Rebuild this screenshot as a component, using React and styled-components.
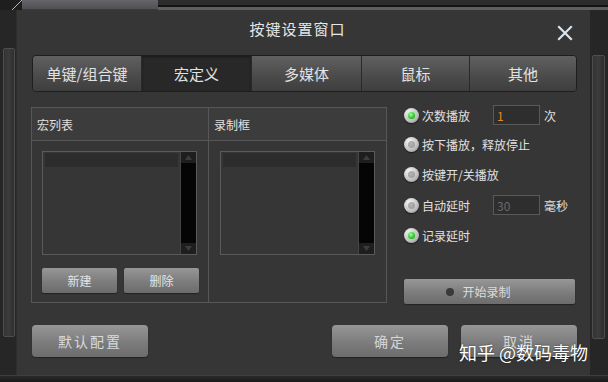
import React from "react";
import styled, { createGlobalStyle, css } from "styled-components";

const Global = createGlobalStyle`
  html, body { margin: 0; padding: 0; background: #2b2b2b; }
  body { font-family: "Noto Sans CJK SC", "Noto Sans", sans-serif; }
`;

const Window = styled.div`
  width: 608px;
  height: 382px;
  display: flex;
  flex-direction: column;
  background: #2a2a2a;
  overflow: hidden;
  position: relative;
`;

const TopFrame = styled.div`
  height: 10px;
  display: flex;
  flex-shrink: 0;
`;

const TopCorner = styled.div`
  width: 22px;
  background: #1e1e1e;
`;

const TopLight = styled.div`
  width: 136px;
  background: linear-gradient(#66666a, #505054);
  border-bottom: 1px solid #3a3a3a;
`;

const TopDark = styled.div`
  flex: 1;
  background: linear-gradient(#2c2c2c 0 55%, #141414 55% 70%, #5e5e5e 70% 100%);
`;

const Middle = styled.div`
  flex: 1;
  display: flex;
  min-height: 0;
`;

const Rail = styled.div`
  width: ${(p) => p.$w}px;
  flex-shrink: 0;
  background: #262626;
  display: flex;
  flex-direction: column;
  padding: ${(p) => p.$pad};
  box-sizing: border-box;
`;

const RailBar = styled.div`
  flex: 1;
  margin: ${(p) => p.$m};
  border: 1px solid #4e4e4e;
  border-radius: 2px;
  background: linear-gradient(90deg, #343434 0%, #3c3c3c 50%, #2e2e2e 100%);
`;

const Panel = styled.div`
  flex: 1;
  background: #363636;
  display: flex;
  flex-direction: column;
  padding: 0 13px 0 15px;
  border-left: 1px solid #2e2e2e;
`;

const TitleBar = styled.div`
  height: 45px;
  display: flex;
  align-items: center;
  justify-content: center;
  position: relative;
  flex-shrink: 0;
`;

const Title = styled.div`
  color: #e6e6e6;
  font-size: 15px;
  letter-spacing: 1px;
  margin-top: -8px;
  margin-left: -14px;
`;

const Close = styled.div`
  position: absolute;
  right: 3px;
  top: 13px;
  width: 18px;
  height: 18px;
`;

const Tabs = styled.div`
  height: 37px;
  display: grid;
  grid-template-columns: 109px 110px 110px 108px 1fr;
  border: 1px solid #1e1e1e;
  border-radius: 4px;
  overflow: hidden;
  box-sizing: border-box;
  flex-shrink: 0;
`;

const Tab = styled.div`
  display: flex;
  align-items: center;
  justify-content: center;
  color: #e2e2e2;
  font-size: 15px;
  border-right: 1px solid #2a2a2a;
  background: linear-gradient(#606060, #4a4a4a 60%, #3e3e3e);
  &:last-child { border-right: none; }
  ${(p) =>
    p.$active &&
    css`
      background: #282828;
      box-shadow: inset 0 1px 2px #1a1a1a;
    `}
`;

const Content = styled.div`
  display: flex;
  margin-top: 15px;
  gap: 17px;
  flex-shrink: 0;
`;

const GroupBox = styled.div`
  width: 356px;
  height: 196px;
  box-sizing: border-box;
  border: 1px solid #575757;
  display: grid;
  grid-template-columns: 177px 1fr;
  margin-left: -1px;
`;

const GroupCol = styled.div`
  display: flex;
  flex-direction: column;
  border-right: ${(p) => (p.$divider ? "1px solid #575757" : "none")};
`;

const GroupHead = styled.div`
  height: 32px;
  background: #3c3c3c;
  border-bottom: 1px solid #575757;
  color: #e0e0e0;
  font-size: 12px;
  display: flex;
  align-items: center;
  padding-left: 5px;
  flex-shrink: 0;
`;

const GroupBody = styled.div`
  padding: 10px 0 0 ${(p) => p.$pl}px;
  display: flex;
  flex-direction: column;
`;

const ListBox = styled.div`
  width: 155px;
  height: 104px;
  box-sizing: border-box;
  border: 1px solid #5a5a5a;
  background: #363636;
  display: flex;
`;

const ListArea = styled.div`
  flex: 1;
  padding: 1px 2px;
`;

const ListRow = styled.div`
  height: 14px;
  background: #2c2c2c;
`;

const ScrollBar = styled.div`
  width: 15px;
  background: #050505;
  border-left: 1px solid #444;
  display: flex;
  flex-direction: column;
  justify-content: space-between;
`;

const ScrollBtn = styled.div`
  height: 11px;
  background: #1e1e1e;
  display: flex;
  align-items: center;
  justify-content: center;
`;

const BtnRow = styled.div`
  display: flex;
  gap: 7px;
  margin-top: 13px;
`;

const GreyButton = styled.div`
  width: ${(p) => p.$w}px;
  height: ${(p) => p.$h}px;
  box-sizing: border-box;
  border-radius: ${(p) => p.$r || 2}px;
  background: linear-gradient(#979797, #7c7c7c 55%, #6c6c6c);
  color: ${(p) => p.$color || "#e4e4e4"};
  font-size: ${(p) => p.$fs || 12}px;
  letter-spacing: ${(p) => p.$ls || 0}px;
  display: flex;
  align-items: center;
  justify-content: center;
  gap: 8px;
  box-shadow: 0 1px 1px #222;
`;

const RightCol = styled.div`
  width: 172px;
  display: flex;
  flex-direction: column;
`;

const OptRow = styled.div`
  height: 20px;
  display: flex;
  align-items: center;
  margin-top: ${(p) => p.$mt || 0}px;
  margin-bottom: ${(p) => p.$mb}px;
  color: #e0e0e0;
  font-size: 12px;
`;

const Radio = styled.div`
  width: 15px;
  height: 15px;
  border-radius: 50%;
  background: radial-gradient(circle at 35% 30%, #f4f4f4, #c4c4c4 55%, #8a8a8a);
  box-shadow: 0 1px 1px #1a1a1a;
  display: flex;
  align-items: center;
  justify-content: center;
  margin-right: 3px;
  flex-shrink: 0;
  &::after {
    content: "";
    width: 7px;
    height: 7px;
    border-radius: 50%;
    background: ${(p) =>
      p.$on
        ? "radial-gradient(circle at 40% 35%, #9cff9c, #2ec22e 60%, #1a8a1a)"
        : "radial-gradient(circle at 40% 35%, #b5b5b5, #969696)"};
    box-shadow: ${(p) => (p.$on ? "0 0 2px #5f5" : "none")};
  }
`;

const OptLabel = styled.span`
  width: 71px;
  white-space: nowrap;
`;

const NumInput = styled.div`
  width: 47px;
  height: 20px;
  box-sizing: border-box;
  border: 1px solid #595959;
  background: #2e2e2e;
  color: ${(p) => p.$color};
  font-size: 12px;
  display: flex;
  align-items: center;
  padding-left: 3px;
  margin-right: 4px;
`;

const RecordBtnWrap = styled.div`
  margin-top: 34px;
`;

const Dot = styled.span`
  width: 8px;
  height: 8px;
  border-radius: 50%;
  background: #3a3a3a;
  margin-left: -22px;
`;

const Footer = styled.div`
  display: flex;
  align-items: flex-start;
  margin-top: 21px;
`;

const Spacer = styled.div`
  flex: 1;
`;

const FooterGap = styled.div`
  width: 13px;
`;

const Watermark = styled.div`
  position: absolute;
  left: 459px;
  top: 339px;
  color: #ffffff;
  font-size: 18px;
  white-space: nowrap;
  text-shadow: 0 0 2px rgba(0, 0, 0, 0.6);
`;

const BottomFrame = styled.div`
  height: 6px;
  background: linear-gradient(#2a2a2a, #1a1a1a);
  border-top: 1px solid #3e3e3e;
  flex-shrink: 0;
`;

const CornerSvg = styled.svg`
  display: block;
`;

function XIcon() {
  return (
    <svg width="18" height="18" viewBox="0 0 18 18">
      <path d="M3 3 L15 15 M15 3 L3 15" stroke="#d8e6ee" strokeWidth="2.2" strokeLinecap="square" />
    </svg>
  );
}

function ScrollArrow({ up }) {
  return (
    <svg width="7" height="5" viewBox="0 0 7 5">
      <path d={up ? "M0 5 L3.5 0 L7 5 Z" : "M0 0 L3.5 5 L7 0 Z"} fill="#3c3c3c" />
    </svg>
  );
}

function List() {
  return (
    <ListBox>
      <ListArea>
        <ListRow />
      </ListArea>
      <ScrollBar>
        <ScrollBtn>
          <ScrollArrow up />
        </ScrollBtn>
        <ScrollBtn>
          <ScrollArrow />
        </ScrollBtn>
      </ScrollBar>
    </ListBox>
  );
}

export default function App() {
  return (
    <>
      <Global />
      <Window>
        <TopFrame>
          <TopCorner>
            <CornerSvg width="22" height="10" viewBox="0 0 22 10">
              <path d="M12 10 L22 0" stroke="#b8c87a" strokeWidth="1" />
            </CornerSvg>
          </TopCorner>
          <TopLight />
          <TopDark />
        </TopFrame>
        <Middle>
          <Rail $w={16} $pad="0 0 0 3px">
            <RailBar $m="38px 1px 38px 0" />
          </Rail>
          <Panel>
            <TitleBar>
              <Title>按键设置窗口</Title>
              <Close>
                <XIcon />
              </Close>
            </TitleBar>
            <Tabs>
              <Tab>单键/组合键</Tab>
              <Tab $active>宏定义</Tab>
              <Tab>多媒体</Tab>
              <Tab>鼠标</Tab>
              <Tab>其他</Tab>
            </Tabs>
            <Content>
              <GroupBox>
                <GroupCol $divider>
                  <GroupHead>宏列表</GroupHead>
                  <GroupBody $pl={10}>
                    <List />
                    <BtnRow>
                      <GreyButton $w={75} $h={25}>新建</GreyButton>
                      <GreyButton $w={75} $h={25}>删除</GreyButton>
                    </BtnRow>
                  </GroupBody>
                </GroupCol>
                <GroupCol>
                  <GroupHead>录制框</GroupHead>
                  <GroupBody $pl={11}>
                    <List />
                  </GroupBody>
                </GroupCol>
              </GroupBox>
              <RightCol>
                <OptRow $mt={-2} $mb={9}>
                  <Radio $on />
                  <OptLabel>次数播放</OptLabel>
                  <NumInput $color="#e8862c">1</NumInput>
                  次
                </OptRow>
                <OptRow $mb={10}>
                  <Radio />
                  按下播放，释放停止
                </OptRow>
                <OptRow $mb={11}>
                  <Radio />
                  按键开/关播放
                </OptRow>
                <OptRow $mb={10}>
                  <Radio />
                  <OptLabel>自动延时</OptLabel>
                  <NumInput $color="#6a6a6a">30</NumInput>
                  毫秒
                </OptRow>
                <OptRow $mb={0}>
                  <Radio $on />
                  记录延时
                </OptRow>
                <RecordBtnWrap>
                  <GreyButton $w={171} $h={25} $color="#dcdcdc">
                    <Dot />
                    开始录制
                  </GreyButton>
                </RecordBtnWrap>
              </RightCol>
            </Content>
            <Footer>
              <GreyButton $w={116} $h={32} $r={4} $fs={14} $ls={2} $color="#dadada">
                默认配置
              </GreyButton>
              <Spacer />
              <GreyButton $w={116} $h={32} $r={4} $fs={14} $ls={2} $color="#d6d6d6">
                确定
              </GreyButton>
              <FooterGap />
              <GreyButton $w={116} $h={32} $r={4} $fs={14} $ls={2} $color="#d6d6d6">
                取消
              </GreyButton>
            </Footer>
          </Panel>
          <Rail $w={18} $pad="0 3px 0 2px">
            <RailBar $m="45px 0 36px 0" />
          </Rail>
        </Middle>
        <BottomFrame />
        <Watermark>知乎 @数码毒物</Watermark>
      </Window>
    </>
  );
}
